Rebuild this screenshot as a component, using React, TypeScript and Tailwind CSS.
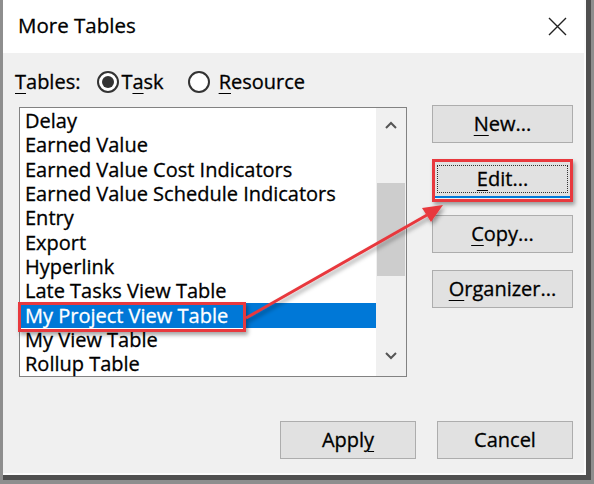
import React from 'react';

const items = [
  'Delay',
  'Earned Value',
  'Earned Value Cost Indicators',
  'Earned Value Schedule Indicators',
  'Entry',
  'Export',
  'Hyperlink',
  'Late Tasks View Table',
  'My Project View Table',
  'My View Table',
  'Rollup Table',
];

const U = ({ children }: { children: React.ReactNode }) => (
  <span className="underline decoration-1 underline-offset-[4px]">{children}</span>
);

const Radio = ({ checked }: { checked?: boolean }) => (
  <span className="w-[22px] h-[22px] rounded-full border-2 border-[#333] bg-white flex items-center justify-center">
    {checked && <span className="w-[12px] h-[12px] rounded-full bg-[#333]" />}
  </span>
);

const Btn = ({ children, focused }: { children: React.ReactNode; focused?: boolean }) => (
  <div
    className={`h-[38px] w-full flex items-center justify-center bg-[#e1e1e1] ${
      focused ? 'border-2 border-[#0078d7]' : 'border border-[#adadad]'
    }`}
  >
    {focused ? (
      <div className="w-[calc(100%-6px)] h-[calc(100%-6px)] border border-dotted border-[#333] flex items-center justify-center">
        {children}
      </div>
    ) : (
      children
    )}
  </div>
);

const App = () => {
  return (
    <div
      className="relative w-[594px] h-[484px] bg-[#8e8e8e] pl-[3px] overflow-hidden text-black [-webkit-text-stroke:0.3px_currentColor]"
      style={{ fontFamily: '"Open Sans", "Noto Sans", sans-serif' }}
    >
      <div className="w-[588px] h-[480px] border-r-[5px] border-b-[5px] border-[#4f4f4f]">
        <div className="w-full h-full border-r-2 border-b-2 border-[#fbfbfb] flex flex-col">
          {/* Title bar */}
          <div className="h-[53px] bg-white flex items-center justify-between pl-[15px] pr-[17px]">
            <span className="text-[20.5px] leading-none -mt-[2px]">More Tables</span>
            <svg width="19" height="19" viewBox="0 0 19 19">
              <path d="M1 1 L18 18 M18 1 L1 18" stroke="#222" strokeWidth="1.4" />
            </svg>
          </div>

          {/* Body */}
          <div className="flex-1 bg-[#f0f0f0] pl-[12px] pr-[11px] flex flex-col text-[20px]">
            <div className="mt-[17px] h-[24px] flex items-center">
              <span className="leading-none">
                <U>T</U>ables:
              </span>
              <span className="ml-[17px] flex items-center gap-[2px]">
                <Radio checked />
                <span className="leading-none">
                  T<U>a</U>sk
                </span>
              </span>
              <span className="ml-[24px] flex items-center gap-[9px]">
                <Radio />
                <span className="leading-none">
                  <U>R</U>esource
                </span>
              </span>
            </div>

            <div className="mt-[13px] flex">
              {/* List box */}
              <div className="ml-[4px] w-[388px] h-[270px] border border-[#828282] bg-white flex">
                <div className="flex-1 pt-[1px]">
                  {items.map((it) => {
                    const sel = it === 'My Project View Table';
                    return (
                      <div
                        key={it}
                        className={`h-[24.3px] flex items-center pl-[5px] leading-none whitespace-nowrap ${
                          sel ? 'bg-[#0078d7] text-white' : ''
                        }`}
                      >
                        {it}
                      </div>
                    );
                  })}
                </div>
                <div className="w-[30px] bg-[#f0f0f0] flex flex-col items-center">
                  <svg className="mt-[13px]" width="12" height="8" viewBox="0 0 12 8">
                    <path d="M1 7 L6 2 L11 7" fill="none" stroke="#555" strokeWidth="2" />
                  </svg>
                  <div className="mt-[54px] w-[28px] h-[93px] bg-[#cdcdcd]" />
                  <svg className="mt-[76px]" width="12" height="8" viewBox="0 0 12 8">
                    <path d="M1 1 L6 6 L11 1" fill="none" stroke="#555" strokeWidth="2" />
                  </svg>
                </div>
              </div>

              {/* Side buttons */}
              <div className="ml-[25px] w-[141px] -mt-[2px] flex flex-col gap-[17px]">
                <Btn>
                  <span>
                    <U>N</U>ew...
                  </span>
                </Btn>
                <Btn focused>
                  <span>
                    <U>E</U>dit...
                  </span>
                </Btn>
                <Btn>
                  <span>
                    <U>C</U>opy...
                  </span>
                </Btn>
                <Btn>
                  <span>
                    <U>O</U>rganizer...
                  </span>
                </Btn>
              </div>
            </div>

            <div className="mt-[44px] flex justify-end gap-[21px]">
              <div className="w-[136px]">
                <Btn>
                  <span>
                    Appl<U>y</U>
                  </span>
                </Btn>
              </div>
              <div className="w-[136px]">
                <Btn>
                  <span>Cancel</span>
                </Btn>
              </div>
            </div>
          </div>
        </div>
      </div>

      {/* Annotations */}
      <div className="absolute left-[18px] top-[302px] w-[228px] h-[30px] border-[3px] border-[#e8393e] shadow-[2px_3px_4px_rgba(0,0,0,0.35)]" />
      <div className="absolute left-[432px] top-[159px] w-[141px] h-[43px] border-[3px] border-[#e8393e] shadow-[2px_3px_4px_rgba(0,0,0,0.35)]" />
      <svg className="absolute inset-0 pointer-events-none" width="594" height="484">
        <defs>
          <filter id="sh" x="-10%" y="-10%" width="130%" height="130%">
            <feDropShadow dx="2" dy="3" stdDeviation="2" floodColor="#000" floodOpacity="0.35" />
          </filter>
        </defs>
        <g filter="url(#sh)">
          <line x1="246" y1="318" x2="427" y2="215" stroke="#e8393e" strokeWidth="3" />
          <polygon points="443,205 431,222 422,208" fill="#e8393e" />
        </g>
      </svg>
    </div>
  );
};

export default App;
